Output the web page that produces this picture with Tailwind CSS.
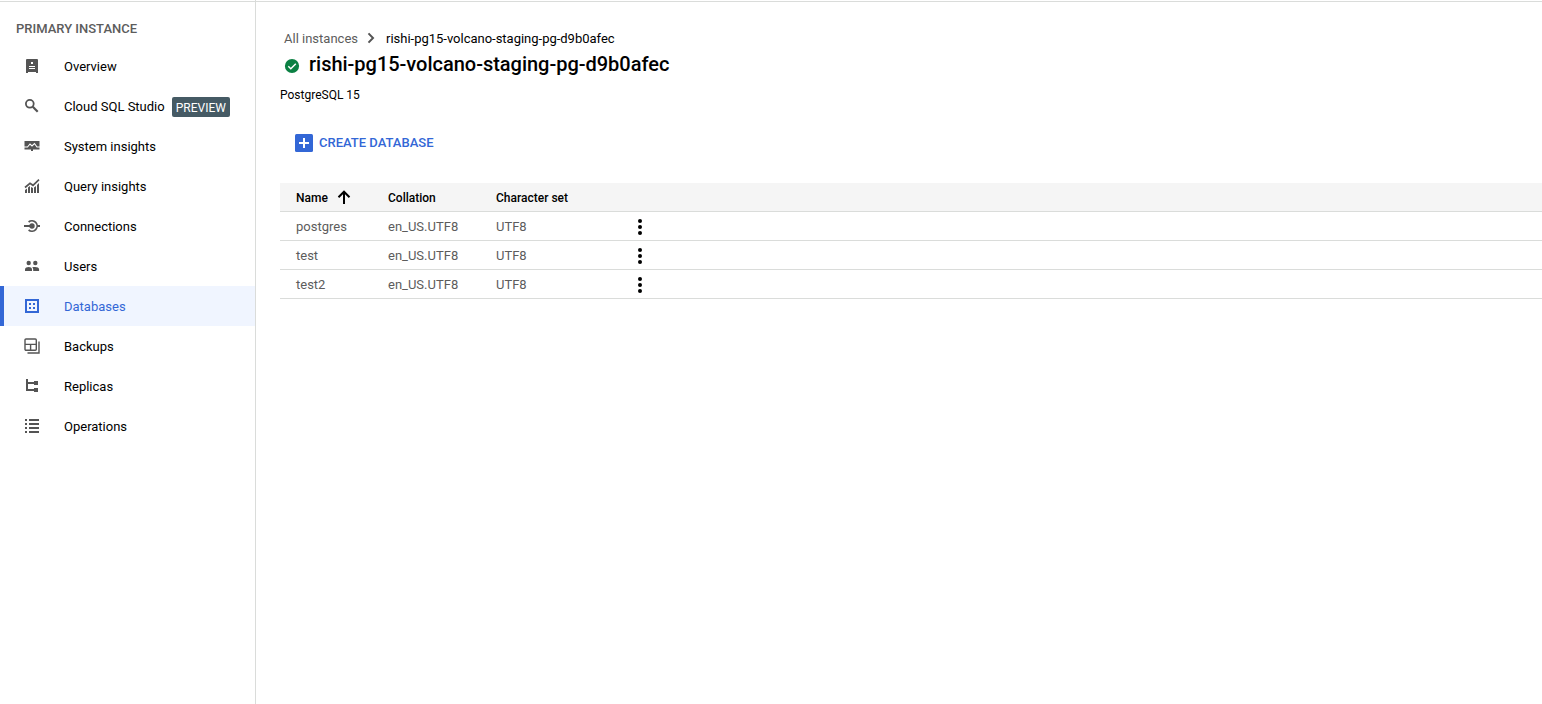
<!DOCTYPE html>
<html lang="en">
<head>
<meta charset="utf-8">
<title>Databases</title>
<script src="https://cdn.jsdelivr.net/npm/@tailwindcss/browser@4"></script>
</head>
<body class="bg-white font-[Roboto,sans-serif] text-[13px] text-black">
<div class="flex h-[704px] overflow-hidden">
  <nav class="w-64 shrink-0 border-r border-[#dadcda]">
    <div class="mt-px h-[45px] border-t border-[#dadcda] pl-4 pt-[17px] font-medium leading-5 text-[#5c5c5c]">PRIMARY INSTANCE</div>
    <ul class="leading-5 text-[#545454]">
      <li class="flex h-10 items-center pl-[23px]">
        <svg class="mr-[23px] size-[18px]" viewBox="0 0 18 18" fill="currentColor"><path fill-rule="evenodd" d="M4 2h10a1 1 0 0 1 1 1v13h-2v-1H5v1H3V3a1 1 0 0 1 1-1zM8 5v2h2V5zM6 9v1h6V9zM6 11v1h6v-1z"/></svg>
        <span class="mt-0.5 text-black">Overview</span>
      </li>
      <li class="flex h-10 items-center pl-[23px]">
        <svg class="mr-[23px] size-[18px]" viewBox="0 0 18 18" fill="none" stroke="currentColor"><circle cx="6.8" cy="6.8" r="3.9" stroke-width="1.8"/><path d="M9.8 9.8l4.900 4.900" stroke-width="2.200"/></svg>
        <span class="mt-0.5 text-black">Cloud SQL Studio</span>
        <span class="ml-[7px] mt-0.5 h-5 rounded-[2px] bg-[#455a64] px-1 text-xs leading-[23px] text-white">PREVIEW</span>
      </li>
      <li class="flex h-10 items-center pl-[23px]">
        <svg class="mr-[23px] size-[18px]" viewBox="0 0 18 18"><path fill="currentColor" d="M1.500 4h15v8.500H10V14H8v-1.500H1.500z"/><path d="M1 10h3.500L7 7l2 2 2.500-2.500L14 10h3" fill="none" stroke="#fff" stroke-width="1.100"/></svg>
        <span class="mt-0.5 text-black">System insights</span>
      </li>
      <li class="flex h-10 items-center pl-[23px]">
        <svg class="mr-[23px] size-[18px]" viewBox="0 0 18 18" fill="currentColor"><path d="M2 13l2-1.500V16H2zM5 10.500L7 9v7H5zM8 10l2 1v5H8zM11 10.500L13 9v7h-2zM14 8l2-2v10h-2z"/><path d="M2 10.500l5-4.200 3 2L16 2.700" fill="none" stroke="currentColor" stroke-width="1.700"/></svg>
        <span class="mt-0.5 text-black">Query insights</span>
      </li>
      <li class="flex h-10 items-center pl-[23px]">
        <svg class="mr-[23px] size-[18px]" viewBox="0 0 18 18" fill="none" stroke="currentColor"><path d="M5.600 5A5.200 5.200 0 1 1 5.600 13" stroke-width="1.700"/><path d="M1 9h7M14 9h3" stroke-width="2"/><circle cx="9" cy="9" r="2.700" fill="currentColor" stroke="none"/></svg>
        <span class="mt-0.5 text-black">Connections</span>
      </li>
      <li class="flex h-10 items-center pl-[23px]">
        <svg class="mr-[23px] size-[18px]" viewBox="0 0 18 18" fill="currentColor"><circle cx="5.700" cy="6" r="2.200"/><circle cx="12.300" cy="6" r="2.200"/><path d="M2 14v-1.500C2 10.700 4 10 5.700 10s3.300.7 3.300 2.500V14zM10.200 14v-1.500c0-1-.4-1.700-1-2.200.8-.2 2-.3 2.900-.3 2 0 4 .7 4 2.500V14z"/></svg>
        <span class="mt-0.5 text-black">Users</span>
      </li>
      <li class="flex h-10 items-center border-l-4 border-[#3367d6] bg-[#f0f5ff] pl-[19px] text-[#3367d6]">
        <svg class="mr-[23px] size-[18px]" viewBox="0 0 18 18" fill="currentColor"><path fill-rule="evenodd" d="M2 2h14v14H2zM4 4v10h10V4zM6 6h2v2H6zM10 6h2v2h-2zM6 10h2v2H6zM10 10h2v2h-2z"/></svg>
        <span class="mt-0.5">Databases</span>
      </li>
      <li class="flex h-10 items-center pl-[23px]">
        <svg class="mr-[23px] size-[18px]" viewBox="0 0 18 18" fill="none" stroke="currentColor" stroke-width="1.400"><rect x="2" y="2" width="11.300" height="11.300" rx="1"/><path d="M2 7.400h11.300M7.600 7.400v6M16 4.500V16H4.500"/></svg>
        <span class="mt-0.5 text-black">Backups</span>
      </li>
      <li class="flex h-10 items-center pl-[23px]">
        <svg class="mr-[23px] size-[18px]" viewBox="0 0 18 18" fill="currentColor"><path d="M3 2h2v3h6V4h4v4h-4V7H5v5h6v-1h4v4h-4v-1H3z"/></svg>
        <span class="mt-0.5 text-black">Replicas</span>
      </li>
      <li class="flex h-10 items-center pl-[23px]">
        <svg class="mr-[23px] size-[18px]" viewBox="0 0 18 18" fill="currentColor"><path d="M2 2h2v2H2zM6 2h10v2H6zM2 6h2v2H2zM6 6h10v2H6zM2 10h2v2H2zM6 10h10v2H6zM2 14h2v2H2zM6 14h10v2H6z"/></svg>
        <span class="mt-0.5 text-black">Operations</span>
      </li>
    </ul>
  </nav>
  <main class="mt-px min-w-0 flex-1 border-t border-[#dadcda] pl-6">
    <div class="flex items-center pl-1 pt-[27px] leading-5">
      <span class="text-[#5c5c5c]">All instances</span>
      <svg class="mb-0.5 ml-2 mr-2.5 h-4 w-2.5" viewBox="0 0 10 16" fill="none" stroke="#545454" stroke-width="2"><path d="M2.500 3.400L7 8l-4.500 4.600"/></svg>
      <span class="tracking-[-0.01px]">rishi-pg15-volcano-staging-pg-d9b0afec</span>
    </div>
    <div class="-mt-px flex h-8 items-center pl-1">
      <svg class="mr-2.5 mt-1 size-4" viewBox="0 0 16 16"><circle cx="8" cy="8" r="7.100" fill="#0b8043"/><path d="M4.300 8.200l2.500 2.500 5-5" fill="none" stroke="#fff" stroke-width="1.500"/></svg>
      <h1 class="-ml-px text-xl font-medium leading-8 tracking-[-0.02px]">rishi-pg15-volcano-staging-pg-d9b0afec</h1>
    </div>
    <div class="mt-[5px] text-xs leading-5">PostgreSQL 15</div>
    <button class="ml-[15px] mt-[27px] flex h-[22px] items-center font-medium text-[#3367d6]">
      <svg class="mr-1.5 size-[18px]" viewBox="0 0 18 18"><rect width="18" height="18" rx="1.500" fill="#3367d6"/><path d="M9 4v10M4 9h10" stroke="#fff" stroke-width="2"/></svg>
      CREATE DATABASE
    </button>
    <table class="mt-[29px] w-full table-fixed border-collapse text-left">
      <colgroup><col class="w-[92px]"><col class="w-[108px]"><col class="w-[144px]"><col></colgroup>
      <thead>
        <tr class="h-[28px] border-b border-[#dadcda] bg-[#f5f5f5] text-xs text-black">
          <th class="p-0 pl-4 pt-0.5 font-medium"><span class="flex items-center">Name<svg class="mb-0.5 ml-[9px] h-4 w-3.5" viewBox="0 0 14 16" fill="none" stroke="#000" stroke-width="2"><path d="M7 15V3M1.500 8.200L7 2.700l5.500 5.500"/></svg></span></th>
          <th class="p-0 pl-4 pt-0.5 font-medium">Collation</th>
          <th class="p-0 pl-4 pt-0.5 font-medium">Character set</th>
          <th class="p-0"></th>
        </tr>
      </thead>
      <tbody class="text-[#5c5c5c]">
        <tr class="h-[29px] border-b border-[#dadcda]"><td class="p-0 pl-4 pt-0.5">postgres</td><td class="p-0 pl-4 pt-0.5">en_US.UTF8</td><td class="p-0 pl-4 pt-0.5">UTF8</td><td class="p-0 pl-[14px] pt-0.5"><svg class="block h-4 w-1" viewBox="0 0 4 16"><circle cx="2" cy="2" r="2"/><circle cx="2" cy="8" r="2"/><circle cx="2" cy="14" r="2"/></svg></td></tr>
        <tr class="h-[29px] border-b border-[#dadcda]"><td class="p-0 pl-4 pt-0.5">test</td><td class="p-0 pl-4 pt-0.5">en_US.UTF8</td><td class="p-0 pl-4 pt-0.5">UTF8</td><td class="p-0 pl-[14px] pt-0.5"><svg class="block h-4 w-1" viewBox="0 0 4 16"><circle cx="2" cy="2" r="2"/><circle cx="2" cy="8" r="2"/><circle cx="2" cy="14" r="2"/></svg></td></tr>
        <tr class="h-[29px] border-b border-[#dadcda]"><td class="p-0 pl-4 pt-0.5">test2</td><td class="p-0 pl-4 pt-0.5">en_US.UTF8</td><td class="p-0 pl-4 pt-0.5">UTF8</td><td class="p-0 pl-[14px] pt-0.5"><svg class="block h-4 w-1" viewBox="0 0 4 16"><circle cx="2" cy="2" r="2"/><circle cx="2" cy="8" r="2"/><circle cx="2" cy="14" r="2"/></svg></td></tr>
      </tbody>
    </table>
  </main>
</div>
</body>
</html>
